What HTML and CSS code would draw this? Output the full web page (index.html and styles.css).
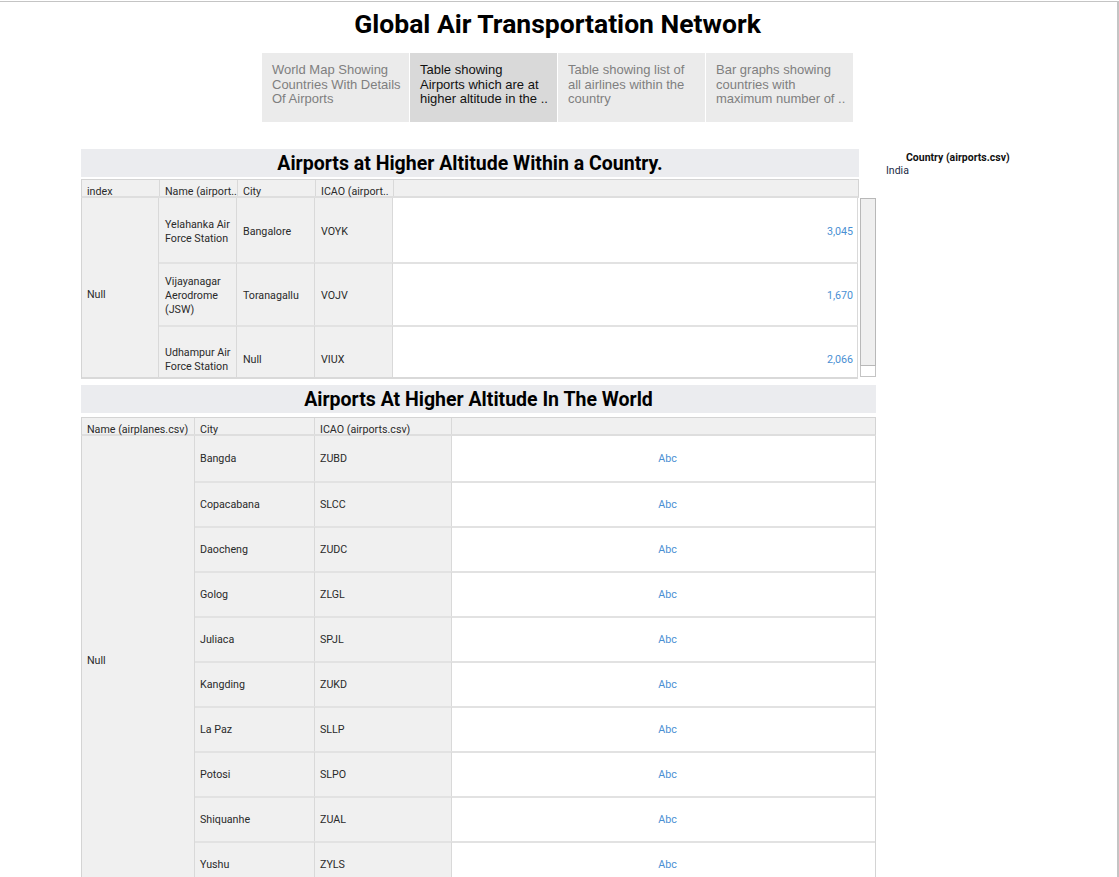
FILE: index.html
```html
<!DOCTYPE html>
<html>
<head>
<meta charset="utf-8">
<link rel="stylesheet" href="styles.css">
</head>
<body>
<div class="frame">
  <h1 class="title">Global Air Transportation Network</h1>
  <div class="tabs">
    <div class="tab">World Map Showing<br>Countries With Details<br>Of Airports</div>
    <div class="tab active">Table showing<br>Airports which are at<br>higher altitude in the ..</div>
    <div class="tab">Table showing list of<br>all airlines within the<br>country</div>
    <div class="tab">Bar graphs showing<br>countries with<br>maximum number of ..</div>
  </div>
  <div class="content">
    <div class="left">
      <div class="sec-head sec1">Airports at Higher Altitude Within a Country.</div>
      <div class="t1-head">
        <div class="hc">index</div>
        <div class="hc">Name (airport..</div>
        <div class="hc">City</div>
        <div class="hc">ICAO (airport..</div>
        <div class="hc last"></div>
      </div>
      <div class="t1-body">
        <div class="viewport">
          <div class="t1-grid">
            <div class="rh null3">Null</div>
            <div class="rh">Yelahanka Air Force Station</div>
            <div class="rh">Bangalore</div>
            <div class="rh">VOYK</div>
            <div class="val num">3,045</div>
            <div class="rh sep">Vijayanagar Aerodrome (JSW)</div>
            <div class="rh sep">Toranagallu</div>
            <div class="rh sep">VOJV</div>
            <div class="val num sep">1,670</div>
            <div class="rh sep">Udhampur Air Force Station</div>
            <div class="rh sep">Null</div>
            <div class="rh sep">VIUX</div>
            <div class="val num sep">2,066</div>
          </div>
        </div>
        <div class="scrollbar">
          <div class="thumb"></div>
          <div class="sb-end"></div>
        </div>
      </div>

      <div class="sec-head sec2">Airports At Higher Altitude In The World</div>
      <div class="t2-head">
        <div class="hc">Name (airplanes.csv)</div>
        <div class="hc">City</div>
        <div class="hc">ICAO (airports.csv)</div>
        <div class="hc last"></div>
      </div>
      <div class="t2-grid">
        <div class="rh null10">Null</div>
        <div class="rh">Bangda</div><div class="rh">ZUBD</div><div class="val abc">Abc</div>
        <div class="rh sep">Copacabana</div><div class="rh sep">SLCC</div><div class="val abc sep">Abc</div>
        <div class="rh sep">Daocheng</div><div class="rh sep">ZUDC</div><div class="val abc sep">Abc</div>
        <div class="rh sep">Golog</div><div class="rh sep">ZLGL</div><div class="val abc sep">Abc</div>
        <div class="rh sep">Juliaca</div><div class="rh sep">SPJL</div><div class="val abc sep">Abc</div>
        <div class="rh sep">Kangding</div><div class="rh sep">ZUKD</div><div class="val abc sep">Abc</div>
        <div class="rh sep">La Paz</div><div class="rh sep">SLLP</div><div class="val abc sep">Abc</div>
        <div class="rh sep">Potosi</div><div class="rh sep">SLPO</div><div class="val abc sep">Abc</div>
        <div class="rh sep">Shiquanhe</div><div class="rh sep">ZUAL</div><div class="val abc sep">Abc</div>
        <div class="rh sep">Yushu</div><div class="rh sep">ZYLS</div><div class="val abc sep">Abc</div>
      </div>
    </div>
    <div class="legend">
      <div class="legend-title">Country (airports.csv)</div>
      <div class="legend-item">India</div>
    </div>
  </div>
</div>
</body>
</html>
```

FILE: styles.css
```css
html, body {
  margin: 0;
  padding: 0;
  background: #ffffff;
}
body {
  font-family: Roboto, "Liberation Sans", sans-serif;
  color: #333333;
}
.frame {
  box-sizing: border-box;
  width: 1119px;
  height: 876px;
  margin-top: 1px;
  border-top: 1px solid #c4c4c4;
  border-right: 2px solid #c4c4c4;
  overflow: hidden;
}
.title {
  margin: 0;
  padding-top: 6px;
  height: 45px;
  font-family: Roboto, sans-serif;
  font-weight: 700;
  font-size: 26.5px;
  line-height: 32px;
  text-align: center;
  color: #000000;
  padding-right: 2px;
}
.tabs {
  display: flex;
  gap: 1px;
  height: 69px;
  margin-left: 262px;
}
.tab {
  box-sizing: border-box;
  width: 147px;
  height: 69px;
  padding: 10px 2px 0 10px;
  background: #ebebeb;
  color: #7f7f7f;
  font-family: "Liberation Sans", Arial, sans-serif;
  font-size: 13px;
  line-height: 14.6px;
  white-space: nowrap;
  overflow: hidden;
}
.tab.active {
  background: #d9d9d9;
  color: #111111;
}
.content {
  display: flex;
  margin-top: 27px;
}
.left {
  margin-left: 81px;
  width: 795px;
  flex: none;
}
.sec-head {
  box-sizing: border-box;
  height: 28px;
  padding-top: 1px;
  background: #ebecef;
  font-weight: 700;
  font-size: 19.5px;
  line-height: 28px;
  text-align: center;
  color: #000000;
}
.sec1 {
  width: 778px;
}
.sec2 {
  width: 795px;
  margin-top: 6px;
}
.t1-head, .t2-head {
  box-sizing: border-box;
  display: grid;
  height: 19px;
  margin-top: 2px;
  background: #f0f0f0;
  border: 1px solid #d4d4d4;
  border-bottom: 2px solid #dedede;
  font-size: 10.7px;
  line-height: 9px;
}
.t1-head {
  width: 778px;
  grid-template-columns: 78px 78px 78px 78px 1fr;
}
.t2-head {
  width: 795px;
  margin-top: 4px;
  grid-template-columns: 113px 120px 137px 1fr;
}
.hc {
  padding-left: 5px;
  padding-top: 7px;
  border-right: 1px solid #d9d9d9;
  white-space: nowrap;
  color: #2a2a2a;
}
.hc.last {
  border-right: none;
}
.t1-body {
  display: flex;
  gap: 2px;
}
.viewport {
  box-sizing: border-box;
  width: 778px;
  height: 181px;
  overflow: hidden;
  border-left: 1px solid #d4d4d4;
  border-bottom: 2px solid #d9d9d9;
}
.t1-grid {
  display: grid;
  grid-template-columns: 77px 78px 78px 78px 1fr;
  grid-template-rows: 64px 63px 64px;
  font-size: 10.7px;
  line-height: 14px;
}
.t1-grid .rh, .t1-grid .val {
  padding-top: 3px;
}
.t2-grid {
  box-sizing: border-box;
  width: 795px;
  display: grid;
  grid-template-columns: 113px 120px 137px 1fr;
  grid-auto-rows: 45px;
  border-left: 1px solid #d4d4d4;
  border-right: 1px solid #d4d4d4;
  font-size: 10.7px;
  line-height: 14px;
}
.rh {
  box-sizing: border-box;
  display: flex;
  align-items: center;
  padding: 0 3px 0 5px;
  background: #f0f0f0;
  border-right: 1px solid #d9d9d9;
  color: #2a2a2a;
}
.t1-grid .rh {
  padding-left: 6px;
}
.t1-grid .null3 {
  padding-left: 5px;
}
.null3 {
  grid-row: span 3;
}
.null10 {
  grid-row: span 10;
}
.sep {
  border-top: 2px solid #e2e2e2;
}
.val {
  box-sizing: border-box;
  display: flex;
  align-items: center;
  background: #ffffff;
  color: #4a8fd3;
}
.num {
  justify-content: flex-end;
  padding-right: 4px;
}
.t1-grid .val {
  border-right: 1px solid #d9d9d9;
}
.abc {
  justify-content: center;
  padding-left: 8px;
}
.scrollbar {
  width: 16px;
  height: 179px;
  display: flex;
  flex-direction: column;
}
.thumb {
  box-sizing: border-box;
  height: 168px;
  background: #efefef;
  border: 1px solid #b8b8b8;
}
.sb-end {
  box-sizing: border-box;
  height: 11px;
  background: #ffffff;
  border: 1px solid #c4c4c4;
  border-top: none;
}
.legend {
  margin-left: 10px;
  padding-top: 2px;
  font-size: 10.5px;
  line-height: 13px;
}
.legend-title {
  font-weight: 700;
  padding-left: 20px;
  color: #111111;
}
.legend-item {
  color: #1a2a44;
}
```
